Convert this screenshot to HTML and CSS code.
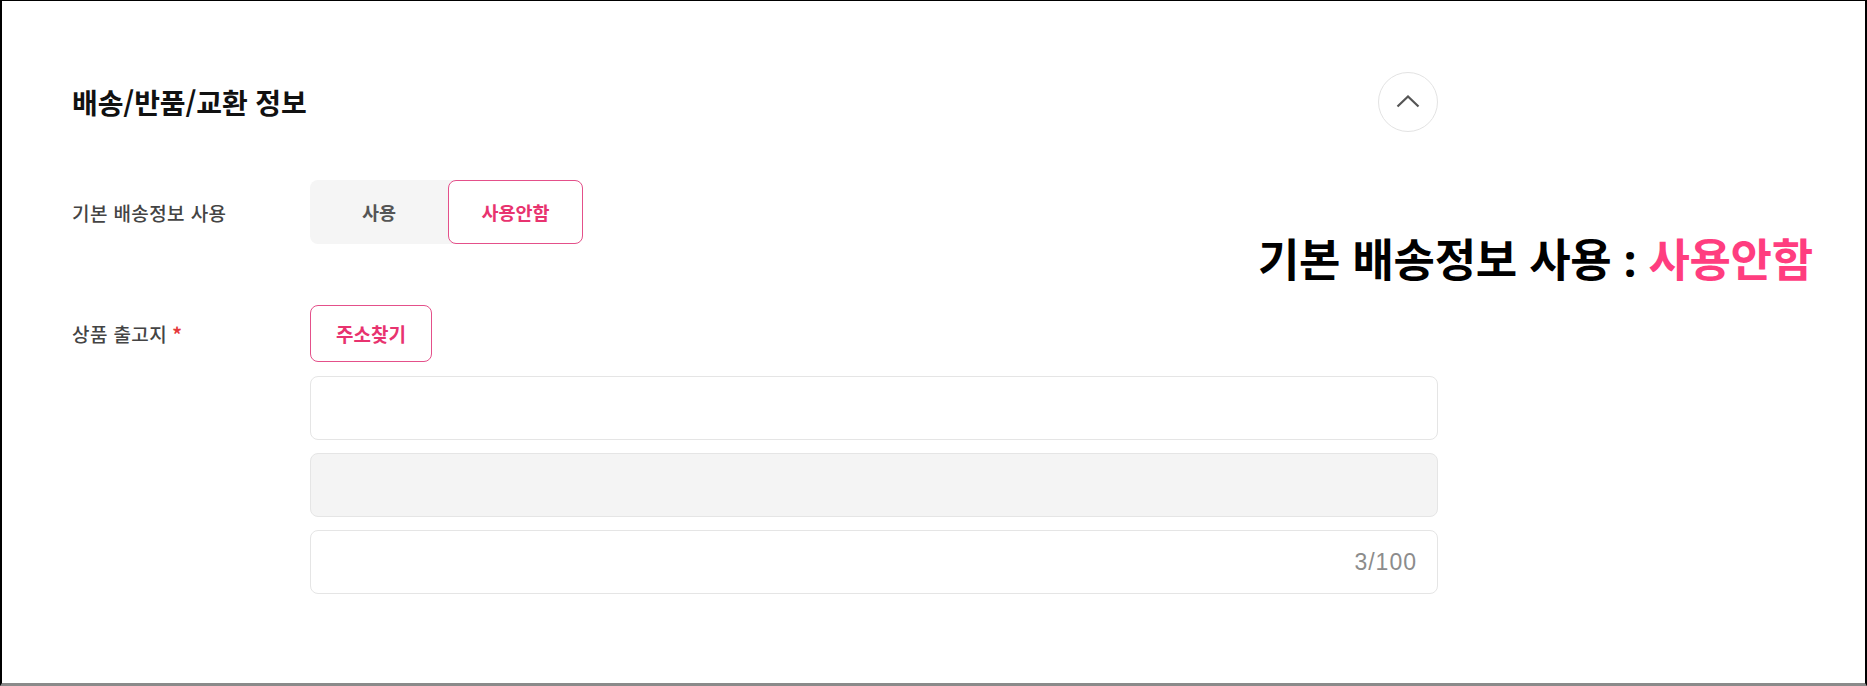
FILE: index.html
```html
<!DOCTYPE html>
<html lang="ko">
<head>
    <meta charset="UTF-8">
    <meta name="viewport" content="width=device-width, initial-scale=1.0">
    <title>배송/반품/교환 정보</title>
    <link rel="stylesheet" href="styles.css">
</head>
<body>
    <div class="frame">
        <section class="panel">
            <div class="panel-head">
                <h2 class="panel-title">배송/반품/교환 정보</h2>
                <button class="fold" type="button" aria-label="접기">
                    <svg width="24" height="13" viewBox="0 0 24 13">
                        <path d="M1.5 11.5 L12 1.5 L22.5 11.5" fill="none" stroke="#555" stroke-width="2.2"/>
                    </svg>
                </button>
            </div>

            <!-- 기본 배송정보 사용 -->
            <div class="row row-use">
                <div class="label">기본 배송정보 사용</div>
                <div class="field">
                    <div class="toggle">
                        <button type="button">사용</button>
                        <button type="button" class="on">사용안함</button>
                    </div>
                </div>
            </div>

            <!-- 상품 출고지 -->
            <div class="row row-addr">
                <div class="label label-tall">상품 출고지<span class="req">*</span></div>
                <div class="field">
                    <button type="button" class="btn-line">주소찾기</button>
                    <div class="input"></div>
                    <div class="input disabled"></div>
                    <div class="input"><span class="count">3/100</span></div>
                </div>
            </div>
        </section>

        <p class="note">기본 배송정보 사용 <span class="colon">:</span> <em>사용안함</em></p>
    </div>
</body>
</html>
```

FILE: styles.css
```css
/* 기본 */
* {
    box-sizing: border-box;
}

body {
    margin: 0;
    background: #fff;
    font-family: "Noto Sans CJK KR", "Noto Sans", sans-serif;
    color: #222;
}

button {
    font-family: inherit;
    cursor: pointer;
}

/* 바깥 테두리 */
.frame {
    position: relative;
    width: 1867px;
    height: 686px;
    border-top: 1px solid #000;
    border-left: 2px solid #000;
    border-right: 2px solid #000;
    border-bottom: 3px solid #8a8a8a;
}

.panel {
    width: 1436px;
    padding: 71px 0 0 70px;
}

/* 헤더 */
.panel-head {
    display: flex;
    justify-content: space-between;
    align-items: center;
    height: 60px;
}

.panel-title {
    margin: 0;
    font-size: 28px;
    font-weight: 700;
    color: #111;
    letter-spacing: -0.1px;
}

.fold {
    display: flex;
    justify-content: center;
    align-items: center;
    width: 60px;
    height: 60px;
    padding: 0 0 2px;
    border: 1px solid #e3e3e3;
    border-radius: 50%;
    background: #fff;
}

/* 행 */
.row {
    display: flex;
}

.row-use {
    margin-top: 48px;
    align-items: center;
}

.row-addr {
    margin-top: 61px;
}

.label {
    width: 238px;
    flex-shrink: 0;
    font-size: 19px;
    font-weight: 500;
    letter-spacing: 0.4px;
    color: #444;
}

.label-tall {
    display: flex;
    align-items: center;
    height: 57px;
}

.req {
    margin-left: 5px;
    color: #e5383b;
    font-weight: 700;
}

.field {
    flex: 1;
    display: flex;
    flex-direction: column;
    align-items: flex-start;
}

/* 사용 / 사용안함 */
.toggle {
    display: grid;
    grid-template-columns: 138px 135px;
    height: 64px;
    border-radius: 8px;
    background: #f5f5f5;
}

.toggle button {
    border: none;
    border-radius: 8px;
    background: transparent;
    font-size: 18.5px;
    font-weight: 700;
    color: #555;
}

.toggle button.on {
    border: 1.5px solid #e4508a;
    background: #fff;
    color: #e8336f;
}

/* 주소찾기 */
.btn-line {
    width: 122px;
    height: 57px;
    border: 1.5px solid #e4508a;
    border-radius: 8px;
    background: #fff;
    font-size: 19px;
    font-weight: 700;
    color: #e8336f;
}

.input {
    display: flex;
    justify-content: flex-end;
    align-items: center;
    width: 100%;
    height: 64px;
    margin-top: 13px;
    padding: 0 20px;
    border: 1px solid #e5e5e5;
    border-radius: 8px;
    background: #fff;
}

.btn-line + .input {
    margin-top: 14px;
}

.input.disabled {
    background: #f4f4f4;
}

.count {
    font-family: "Liberation Sans", Arial, sans-serif;
    font-size: 23px;
    letter-spacing: 1px;
    color: #8c8c8c;
}

/* 오른쪽 안내 문구 */
.note {
    position: absolute;
    left: 1256px;
    top: 230px;
    margin: 0;
    font-size: 45px;
    line-height: 54px;
    font-weight: 700;
    color: #000;
    letter-spacing: -0.3px;
}

.note .colon {
    font-family: "Noto Sans", sans-serif;
}

.note em {
    font-style: normal;
    color: #ff3d7f;
}
```
